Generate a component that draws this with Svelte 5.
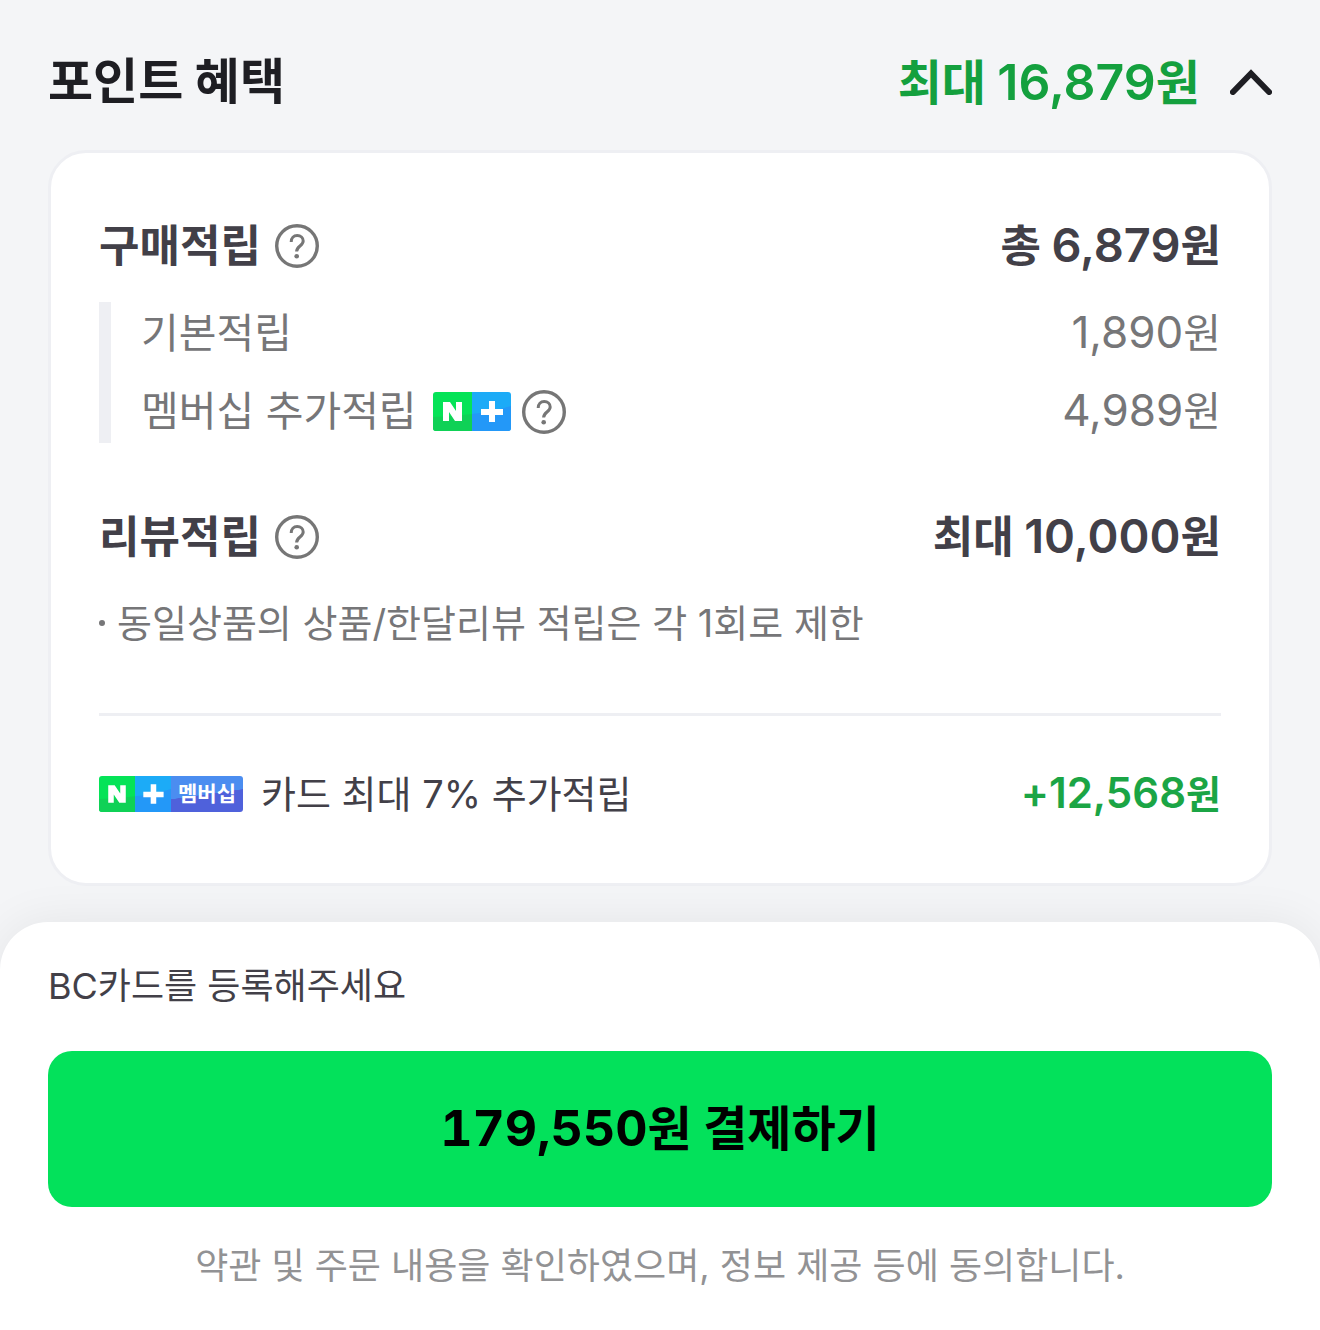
<script lang="ts">
  let open = $state(true);

  const details = [
    { label: "기본적립", amount: "1,890", membership: false },
    { label: "멤버십 추가적립", amount: "4,989", membership: true },
  ];
</script>

{#snippet won(value: string)}<span class="num">{value}</span>원{/snippet}

{#snippet help(label: string)}
  <button class="help" type="button" aria-label="{label} 안내">
    <svg viewBox="0 0 44 44" fill="none" stroke="currentColor">
      <circle cx="22" cy="22" r="20.3" stroke-width="3.400" />
      <path d="M16.200 18c0-4 2.500-6.400 6-6.400s6 2.200 6 5.400c0 4.800-6.600 5.300-6.600 10.400" stroke-width="3" />
      <circle cx="21.700" cy="32.200" r="2.300" fill="currentColor" stroke="none" />
    </svg>
  </button>
{/snippet}

{#snippet logo()}
  <svg class="logo" viewBox="0 0 78 39" aria-hidden="true">
    <path d="M0 0h39v39H0z" fill="#05e357" />
    <path d="M0 25q20 0 39-3v17H0z" fill="#0fd156" />
    <path d="M39 0h39v39H39z" fill="#1cabf7" />
    <path d="M39 22q20-2 39-8v25H39z" fill="#2398f8" />
    <path d="M10 10h7l6 9v-9h6v19h-7l-6-9v9h-6z" fill="#fff" />
    <path d="M56 9h6v8h8v6h-8v7h-6v-7h-8v-6h8z" fill="#fff" />
  </svg>
{/snippet}

<div class="page">
  <section class="benefit">
    <header class="head">
      <h1>포인트 혜택</h1>
      <strong class="max">최대 {@render won("16,879")}</strong>
      <button
        class="toggle"
        type="button"
        aria-label="포인트 혜택 상세"
        aria-expanded={open}
        onclick={() => (open = !open)}
      >
        <svg class:closed={!open} viewBox="0 0 42 26" fill="none" stroke="#1e1e23" stroke-width="6">
          <path d="M3 23 21 4.500 39 23" stroke-linecap="round" stroke-linejoin="miter" />
        </svg>
      </button>
    </header>

    {#if open}
      <div class="card">
        <div class="row title">
          <h2>구매적립</h2>
          {@render help("구매적립")}
          <strong class="amount">총 {@render won("6,879")}</strong>
        </div>
        <ul class="details">
          {#each details as item}
            <li class="row">
              <span>{item.label}</span>
              {#if item.membership}
                <span class="badge">{@render logo()}</span>
                {@render help(item.label)}
              {/if}
              <span class="amount">{@render won(item.amount)}</span>
            </li>
          {/each}
        </ul>

        <div class="row title review">
          <h2>리뷰적립</h2>
          {@render help("리뷰적립")}
          <strong class="amount">최대 {@render won("10,000")}</strong>
        </div>
        <p class="note">동일상품의 상품/한달리뷰 적립은 각 1회로 제한</p>

        <div class="row extra">
          <span class="badge wide">{@render logo()}<span class="member">멤버십</span></span>
          <span>카드 최대 7% 추가적립</span>
          <strong class="amount plus">{@render won("+12,568")}</strong>
        </div>
      </div>
    {/if}
  </section>

  <footer class="sheet">
    <p class="message">BC카드를 등록해주세요</p>
    <button class="pay" type="button">{@render won("179,550")} 결제하기</button>
    <p class="terms">약관 및 주문 내용을 확인하였으며, 정보 제공 등에 동의합니다.</p>
  </footer>
</div>

<style>
  :global(body) {
    margin: 0;
    background: #f4f5f7;
  }
  .page {
    display: flex;
    flex-direction: column;
    min-height: 100vh;
    background: #f4f5f7;
    color: #424048;
    font-family: Inter, "Noto Sans CJK KR", sans-serif;
  }
  h1,
  h2,
  p,
  ul {
    margin: 0;
    padding: 0;
    list-style: none;
  }
  button {
    padding: 0;
    border: 0;
    background: none;
    font: inherit;
    color: inherit;
    cursor: pointer;
  }
  svg {
    display: block;
  }
  /* Digits run slightly larger than the hangul around them */
  .num {
    line-height: 1;
  }
  .benefit {
    flex: 1;
    padding: 48px 48px 36px;
  }
  .head {
    display: flex;
    align-items: center;
    height: 68px;
    margin-bottom: 34px;
  }
  h1 {
    flex: 1;
    font-size: 49px;
    line-height: 68px;
    color: #1e1e23;
  }
  .max {
    padding-top: 2px;
    font-size: 48px;
    line-height: 64px;
    color: #14a03e;
  }
  .max .num {
    font-size: 50px;
    font-weight: 600;
  }
  .toggle {
    margin-left: 30px;
  }
  .toggle svg {
    width: 42px;
    height: 26px;
  }
  .closed {
    transform: rotate(180deg);
  }
  .card {
    padding: 61px 48px 59px;
    border: 3px solid #eeeff3;
    border-radius: 38px;
    background: #fff;
  }
  .row {
    display: flex;
    align-items: center;
  }
  .amount {
    margin-left: auto;
  }
  .title {
    height: 64px;
    font-size: 44px;
    line-height: 64px;
  }
  h2 {
    font-size: inherit;
  }
  .title .num {
    font-size: 47px;
    font-weight: 600;
  }
  .help {
    margin-left: 14px;
    color: #767676;
  }
  .help svg {
    width: 44px;
    height: 44px;
  }
  .details {
    margin-top: 24px;
    padding-left: 30px;
    border-left: 12px solid #eeeff3;
    font-size: 41px;
    line-height: 63px;
    color: #767678;
  }
  .details .num {
    font-size: 44px;
  }
  .details li + li {
    margin-top: 15px;
  }
  .badge {
    display: flex;
    height: 39px;
    margin-left: 16px;
    border-radius: 3px;
    overflow: hidden;
  }
  .badge + .help {
    margin-left: 11px;
  }
  .logo {
    height: 100%;
  }
  .review {
    margin-top: 62px;
  }
  .note {
    display: flex;
    align-items: center;
    margin-top: 25px;
    padding-bottom: 61px;
    border-bottom: 3px solid #eeeff3;
    font-size: 38px;
    line-height: 58px;
    color: #767678;
  }
  .note::before {
    content: "";
    width: 6px;
    height: 6px;
    margin-right: 12px;
    border-radius: 50%;
    background: currentColor;
  }
  .extra {
    margin-top: 48px;
    font-size: 38px;
    line-height: 60px;
  }
  .badge.wide {
    height: 36px;
    margin: 0 18px 0 0;
  }
  .member {
    padding: 0 7px;
    background: linear-gradient(172deg, #4b8df0 50%, #4f61db 51%);
    color: #fff;
    font-size: 21px;
    font-weight: 700;
    line-height: 36px;
  }
  .plus {
    color: #1ba545;
  }
  .plus .num {
    font-size: 42px;
    font-weight: 600;
  }
  .sheet {
    padding: 36px 48px;
    border-radius: 48px 48px 0 0;
    background: #fff;
    box-shadow: 0 0 48px rgba(0, 0, 0, 0.07);
  }
  .message {
    font-size: 36px;
    line-height: 56px;
  }
  .pay {
    width: 100%;
    height: 156px;
    margin-top: 37px;
    padding-bottom: 8px;
    border-radius: 24px;
    background: #03e15b;
    color: #000;
    font-size: 48px;
    font-weight: 700;
  }
  .pay .num {
    font-size: 50px;
    font-variant-numeric: tabular-nums;
  }
  .terms {
    margin-top: 30px;
    font-size: 36px;
    line-height: 58px;
    text-align: center;
    color: #929294;
  }
</style>
